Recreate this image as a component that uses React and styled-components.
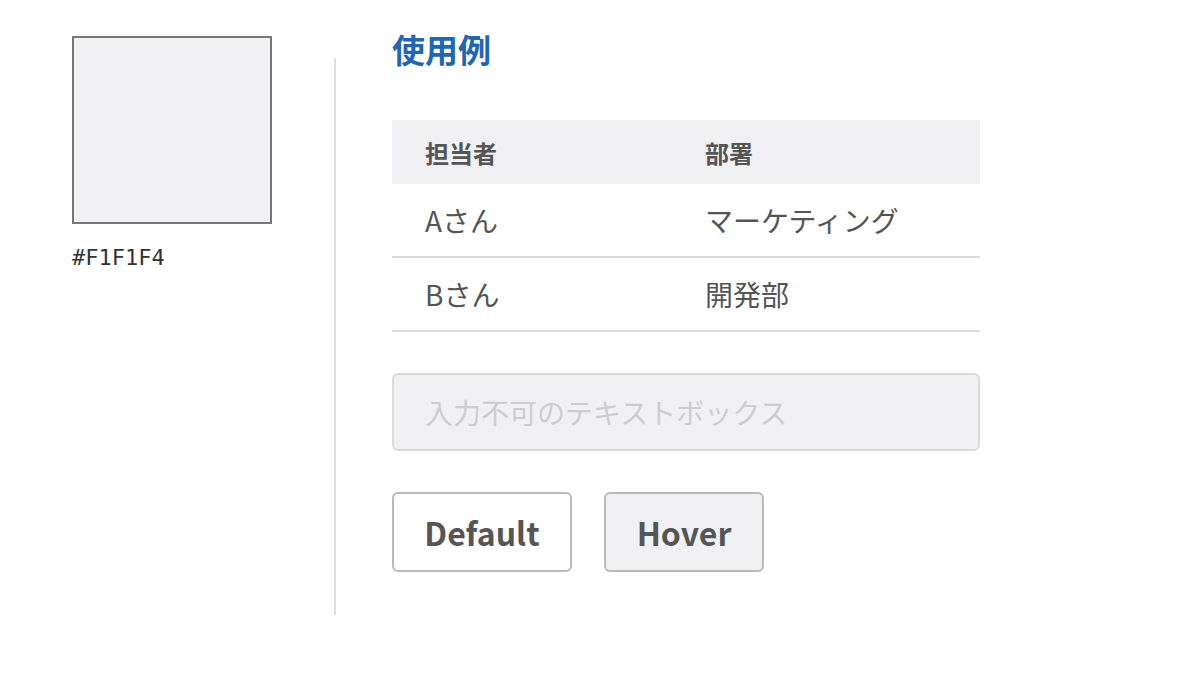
import React from "react";
import styled, { createGlobalStyle } from "styled-components";

const GlobalStyle = createGlobalStyle`
  body {
    margin: 0;
    background: #fff;
    font-family: "Noto Sans CJK JP", "Noto Sans", sans-serif;
  }
`;

const Page = styled.div`
  display: flex;
  align-items: flex-start;
  padding-left: 72px;
  width: 1200px;
  height: 675px;
  box-sizing: border-box;
`;

const SwatchColumn = styled.div`
  width: 200px;
  margin-top: 36px;
`;

const Swatch = styled.div`
  width: 200px;
  height: 188px;
  box-sizing: border-box;
  border: 2px solid #767676;
  background: ${(p) => p.color};
`;

const Code = styled.div`
  margin-top: 21px;
  font-family: "DejaVu Sans Mono", "Liberation Mono", monospace;
  font-size: 22px;
  color: #333;
  line-height: 1.2;
`;

const Divider = styled.div`
  width: 2px;
  height: 557px;
  margin: 58px 56px 0 62px;
  background: #dedede;
`;

const Content = styled.div`
  width: 588px;
  padding-top: 25px;
`;

const Heading = styled.h2`
  margin: 0 0 47px;
  font-size: 33px;
  line-height: 48px;
  font-weight: 700;
  color: #2366b0;
`;

const Table = styled.table`
  width: 100%;
  border-collapse: collapse;
  table-layout: fixed;
`;

const Th = styled.th`
  height: 64px;
  padding: 0 0 0 33px;
  text-align: left;
  background: #f1f1f4;
  font-size: 24px;
  font-weight: 700;
  color: #555;
  width: ${(p) => p.$width || "auto"};
`;

const Td = styled.td`
  height: 72px;
  padding: 0 0 0 33px;
  font-size: 28px;
  font-weight: 400;
  color: #555;
  border-bottom: 2px solid #dcdcdc;
`;

const Field = styled.input`
  display: block;
  width: 100%;
  height: 78px;
  margin-top: 41px;
  box-sizing: border-box;
  padding: 0 31px;
  border: 2px solid #dcdcdc;
  border-radius: 6px;
  background: #f1f1f4;
  font-family: inherit;
  font-size: 28px;
  &::placeholder {
    color: #cdcdd0;
  }
`;

const ButtonRow = styled.div`
  display: flex;
  gap: 32px;
  margin-top: 41px;
`;

const Button = styled.button`
  width: ${(p) => p.$width}px;
  height: 80px;
  border: 2px solid #b9b9b9;
  border-radius: 6px;
  background: ${(p) => (p.$hover ? "#f1f1f4" : "#fff")};
  font-family: inherit;
  font-size: 32px;
  font-weight: 700;
  color: #555;
  padding: 0;
`;

export default function App() {
  return (
    <>
      <GlobalStyle />
      <Page>
        <SwatchColumn>
          <Swatch color="#F1F1F4" />
          <Code>#F1F1F4</Code>
        </SwatchColumn>
        <Divider />
        <Content>
          <Heading>使用例</Heading>
          <Table>
            <thead>
              <tr>
                <Th $width="247px">担当者</Th>
                <Th>部署</Th>
              </tr>
            </thead>
            <tbody>
              <tr>
                <Td>Aさん</Td>
                <Td>マーケティング</Td>
              </tr>
              <tr>
                <Td>Bさん</Td>
                <Td>開発部</Td>
              </tr>
            </tbody>
          </Table>
          <Field disabled placeholder="入力不可のテキストボックス" />
          <ButtonRow>
            <Button $width={180}>Default</Button>
            <Button $width={160} $hover>
              Hover
            </Button>
          </ButtonRow>
        </Content>
      </Page>
    </>
  );
}
